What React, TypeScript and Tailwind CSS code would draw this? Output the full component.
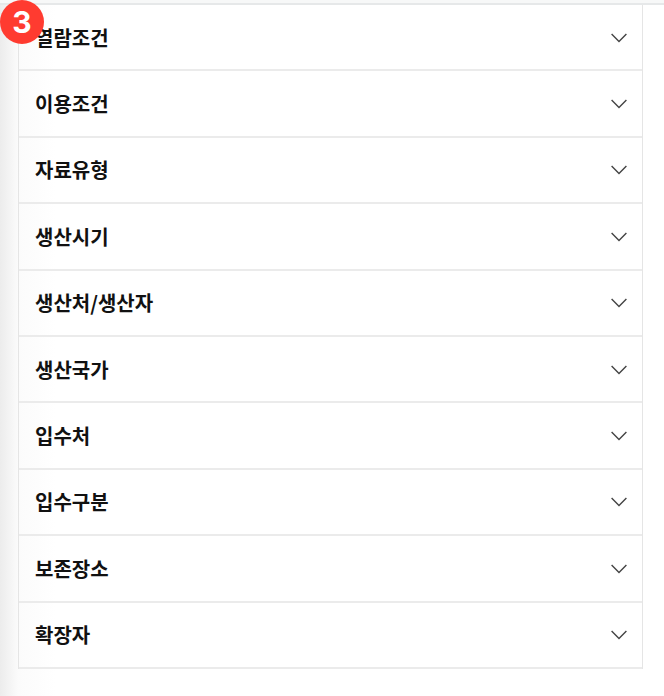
import React, { useState } from 'react';

const FILTERS = [
  { id: 'access', label: '열람조건' },
  { id: 'usage', label: '이용조건' },
  { id: 'type', label: '자료유형' },
  { id: 'period', label: '생산시기' },
  { id: 'producer', label: '생산처/생산자' },
  { id: 'country', label: '생산국가' },
  { id: 'source', label: '입수처' },
  { id: 'acquisition', label: '입수구분' },
  { id: 'location', label: '보존장소' },
  { id: 'extension', label: '확장자' }
];

function Chevron({ open }: { open: boolean }) {
  return (
    <svg
      viewBox="0 0 16 10"
      className={`w-4 h-[10px] shrink-0 ${open ? 'rotate-180' : ''}`}
      fill="none"
      stroke="#444444"
      strokeWidth="1.4"
      aria-hidden="true"
    >
      <path d="M0.6 1L8 8.6L15.4 1" />
    </svg>
  );
}

export default function App() {
  const [openId, setOpenId] = useState<string | null>(null);

  return (
    <div className="relative min-h-screen flex flex-col bg-white font-['Liberation_Sans','Noto_Sans_CJK_KR',sans-serif]">
      <div className="h-[5px] bg-[#f7f8f8] border-b-2 border-[#e6e8e9]" />

      <main className="grow pl-[18px] pr-[21px] pb-7 bg-linear-to-r from-[#ececec] via-[#fbfbfb] via-[18px] to-white to-[56px]">
        <ul className="grid auto-rows-fr min-h-[664px] border-x border-[#e5e5e5]">
          {FILTERS.map((filter) => (
            <li key={filter.id} className="flex border-b-2 border-[#ebebeb]">
              <button
                type="button"
                aria-expanded={openId === filter.id}
                onClick={() => setOpenId(openId === filter.id ? null : filter.id)}
                className="flex grow items-center justify-between pl-4 pr-[15px] pt-px text-left"
              >
                <span className="text-xl leading-8 font-bold font-['Noto_Sans_CJK_KR',sans-serif] text-[#111111]">
                  {filter.label}
                </span>
                <Chevron open={openId === filter.id} />
              </button>
            </li>
          ))}
        </ul>
      </main>

      {/* Step number */}
      <span className="absolute top-0 left-0 flex items-center justify-center size-11 rounded-full bg-[#ff3b30] text-white text-3xl font-bold font-['Inter',sans-serif]">
        3
      </span>
    </div>
  );
}
